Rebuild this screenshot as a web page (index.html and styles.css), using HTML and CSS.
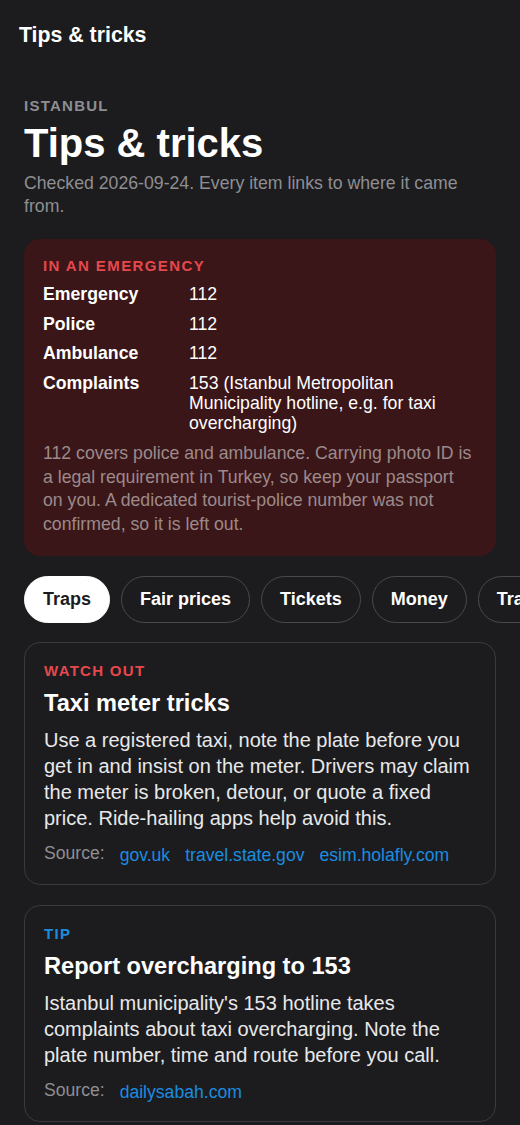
FILE: index.html
```html
<!doctype html>
<html lang="en">

<head>
    <meta charset="utf-8">
    <meta name="viewport" content="width=device-width, initial-scale=1">
    <title>Tips &amp; tricks - Istanbul</title>
    <link rel="stylesheet" href="styles.css">
</head>

<body>
    <div class="topbar">Tips &amp; tricks</div>

    <div class="page">
        <div class="eyebrow">Istanbul</div>
        <h1 class="title">Tips &amp; tricks</h1>
        <p class="checked">Checked 2026-09-24. Every item links to where it came from.</p>

        <div class="emergency">
            <div class="emergency-head">In an emergency</div>
            <div class="numbers">
                <div class="num-label">Emergency</div>
                <div class="num-value">112</div>
                <div class="num-label">Police</div>
                <div class="num-value">112</div>
                <div class="num-label">Ambulance</div>
                <div class="num-value">112</div>
                <div class="num-label">Complaints</div>
                <div class="num-value">153 (Istanbul Metropolitan Municipality hotline, e.g. for taxi overcharging)</div>
            </div>
            <p class="emergency-note">112 covers police and ambulance. Carrying photo ID is a legal requirement in Turkey, so keep your passport on you. A dedicated tourist-police number was not confirmed, so it is left out.</p>
        </div>
    </div>

    <div class="tabs">
        <button type="button" class="tab active">Traps</button>
        <button type="button" class="tab">Fair prices</button>
        <button type="button" class="tab">Tickets</button>
        <button type="button" class="tab">Money</button>
        <button type="button" class="tab">Transport</button>
    </div>

    <div class="cards">
        <div class="card">
            <div class="kind warn">Watch out</div>
            <h2 class="card-title">Taxi meter tricks</h2>
            <p class="card-text">Use a registered taxi, note the plate before you get in and insist on the meter. Drivers may claim the meter is broken, detour, or quote a fixed price. Ride-hailing apps help avoid this.</p>
            <div class="sources">
                <span class="source-label">Source:</span>
                <a href="#">gov.uk</a>
                <a href="#">travel.state.gov</a>
                <a href="#">esim.holafly.com</a>
            </div>
        </div>

        <div class="card">
            <div class="kind tip">Tip</div>
            <h2 class="card-title">Report overcharging to 153</h2>
            <p class="card-text">Istanbul municipality's 153 hotline takes complaints about taxi overcharging. Note the plate number, time and route before you call.</p>
            <div class="sources">
                <span class="source-label">Source:</span>
                <a href="#">dailysabah.com</a>
            </div>
        </div>
    </div>
</body>

</html>
```

FILE: styles.css
```css
body {
    margin: 0;
    background-color: #1c1c1e;
    color: #fff;
    font-family: "Liberation Sans", Arial, sans-serif;
    overflow-x: hidden;
}

.topbar {
    font-size: 21.3px;
    font-weight: bold;
    line-height: 26px;
    padding: 22px 19px 0;
}

.page {
    padding: 48px 24px 0;
}

.eyebrow {
    font-size: 15px;
    font-weight: bold;
    text-transform: uppercase;
    letter-spacing: 1.25px;
    color: #8e8e93;
    line-height: 20px;
}

.title {
    font-size: 40px;
    line-height: 46px;
    margin: 4px 0 0;
}

.checked {
    font-size: 17.7px;
    line-height: 23px;
    color: #8e8e93;
    margin: 5.5px 0 0;
}

.emergency {
    margin-top: 21.5px;
    background-color: #3b1618;
    border-radius: 16px;
    padding: 17px 19px 19.5px;
}

.emergency-head {
    color: #e5484d;
    font-size: 15px;
    font-weight: bold;
    text-transform: uppercase;
    letter-spacing: 1.4px;
    line-height: 20px;
}

.numbers {
    display: grid;
    grid-template-columns: 146px 1fr;
    row-gap: 9.5px;
    margin-top: 8px;
    font-size: 17.7px;
    line-height: 20px;
}

.num-label {
    font-weight: bold;
}

.emergency-note {
    margin: 9.5px 0 0;
    font-size: 17.7px;
    line-height: 23.5px;
    color: #9c8a8b;
}

.tabs {
    display: flex;
    gap: 11px;
    margin-top: 20px;
    padding: 0 24px;
    overflow-x: auto;
    scrollbar-width: none;
    white-space: nowrap;
}

.tab {
    flex: none;
    font-family: inherit;
    font-size: 18px;
    font-weight: bold;
    color: #fff;
    background-color: transparent;
    border: 1px solid #4a4a4d;
    border-radius: 24px;
    height: 47px;
    padding: 0 18px;
}

.tab.active {
    background-color: #fff;
    color: #1c1c1e;
    border-color: #fff;
}

.cards {
    display: flex;
    flex-direction: column;
    gap: 20px;
    padding: 19px 24px 20px;
}

.card {
    border: 1px solid #3a3a3c;
    border-radius: 16px;
    padding: 18px 19px 19px;
}

.kind {
    font-size: 15px;
    font-weight: bold;
    text-transform: uppercase;
    letter-spacing: 1.3px;
    line-height: 20px;
}

.kind.warn {
    color: #e5484d;
}

.kind.tip {
    color: #1a8ce0;
}

.card-title {
    font-size: 23.6px;
    line-height: 28px;
    margin: 8px 0 0;
}

.card-text {
    font-size: 20px;
    line-height: 26px;
    color: #e8e8ea;
    margin: 10px 0 0;
}

.sources {
    display: flex;
    gap: 15px;
    margin-top: 10px;
    font-size: 17.6px;
    line-height: 24px;
}

.source-label {
    color: #8e8e93;
}

.sources a {
    color: #1a8ce0;
    text-decoration: none;
    position: relative;
    top: 2px;
}
```
